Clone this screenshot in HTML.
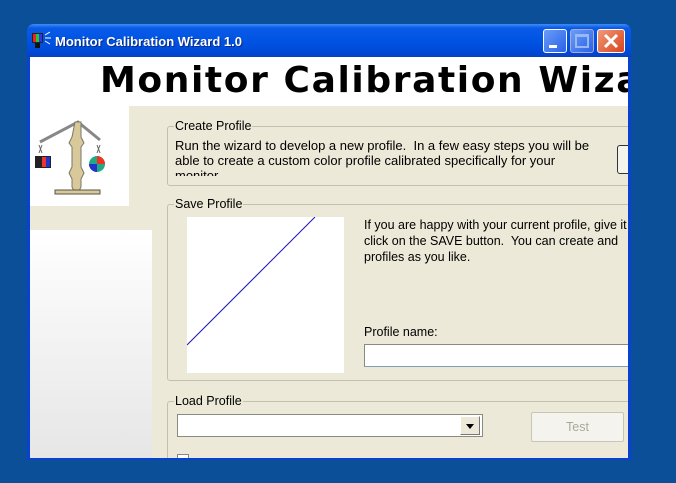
<!DOCTYPE html>
<html><head><style>
*{margin:0;padding:0;box-sizing:border-box}
body{width:676px;height:483px;background:#0a4f98;position:relative;overflow:hidden;font-family:"Liberation Sans",sans-serif;font-size:12px;color:#000}
.a{position:absolute}
.win{left:27px;top:24px;width:604px;height:436px;background:#0842d0;border-radius:7px 7px 0 0}
.tb{left:27px;top:24px;width:604px;height:33px;border-radius:7px 7px 0 0;background:linear-gradient(#3d8df7 0%,#0a5ae8 12%,#0054e3 50%,#0048d8 85%,#0a3fc0 100%)}
.client{left:30px;top:57px;width:598px;height:401px;background:#ece9d8;overflow:hidden}
.gb{position:absolute;border:1px solid #c4c0b0;border-radius:3px}
.gl{position:absolute;top:-8px;left:6px;background:#ece9d8;padding:0 1px;font-size:12.5px}
.btn{position:absolute;border-radius:3px;border:1px solid #fff}
</style></head><body>
<div class="a win"></div>
<div class="a tb"></div>
<svg class="a" style="left:31px;top:31px" width="22" height="20">
<rect x="1" y="2" width="11" height="10" fill="#222"/><rect x="2" y="3" width="3" height="8" fill="#e22"/><rect x="5" y="3" width="3" height="8" fill="#2c2"/><rect x="8" y="3" width="3" height="8" fill="#33e"/><rect x="4" y="12" width="5" height="5" fill="#111"/>
<path d="M14 4l5-3M14 7h6M14 10l5 3" stroke="#fff" stroke-width="1"/></svg>
<div class="a" style="left:55px;top:34px;color:#fff;font-weight:bold;font-size:13px;text-shadow:1px 1px #0a2a80">Monitor Calibration Wizard 1.0</div>
<div class="btn a" style="left:543px;top:29px;width:24px;height:24px;background:linear-gradient(135deg,#6a9cf8,#2a62e8)"><div class="a" style="left:5px;top:15px;width:8px;height:3px;background:#fff"></div></div>
<div class="btn a" style="left:570px;top:29px;width:24px;height:24px;background:linear-gradient(135deg,#6a9cf8,#2a62e8);border-color:#aac"><div class="a" style="left:4px;top:4px;width:14px;height:14px;border:2px solid #9ab8f0;border-top-width:3px"></div></div>
<div class="btn a" style="left:597px;top:29px;width:28px;height:24px;background:linear-gradient(135deg,#f09a78,#d8441c)"><svg class="a" style="left:5px;top:3px" width="16" height="16"><path d="M2 2L14 14M14 2L2 14" stroke="#fff" stroke-width="3"/></svg></div>
<div class="a client">
 <div class="a" style="left:0;top:0;width:598px;height:49px;background:#fff"></div>
 <div class="a" style="left:70px;top:3px;font-size:36px;font-weight:bold;white-space:nowrap;font-family:'DejaVu Sans','Liberation Sans',sans-serif;letter-spacing:1.6px">Monitor Calibration Wizard</div>
 <div class="a" style="left:0;top:49px;width:99px;height:100px;background:#fff"></div>
 <svg class="a" style="left:0;top:60px" width="99" height="85">
  <path d="M10 25L48 5L70 23" stroke="#888" stroke-width="3" fill="none"/>
  <path d="M45 5h6v15l3 6-3 4v20l3 6-3 6v8l-3 6h-3l-3-6v-8l-3-6 3-6V30l-3-4 3-6z" fill="#d8c89a" stroke="#776" stroke-width="1"/>
  <rect x="25" y="73" width="45" height="4" fill="#d8c89a" stroke="#554"/>
  <path d="M9 28l3 8M12 28l-3 8" stroke="#666"/><path d="M67 28l3 8M70 28l-3 8" stroke="#666"/>
  <rect x="5" y="39" width="16" height="12" fill="#222"/><rect x="12" y="40" width="4" height="10" fill="#e33"/><rect x="16" y="40" width="4" height="10" fill="#23c"/>
  <circle cx="67" cy="47" r="8" fill="#2a8"/><path d="M67 39a8 8 0 0 1 8 8h-8z" fill="#e32"/><path d="M59 47a8 8 0 0 0 8 8v-8z" fill="#23c"/>
 </svg>
 <div class="a" style="left:0;top:173px;width:122px;height:228px;background:linear-gradient(#fff,#e6e6e6)"></div>
 <div class="gb" style="left:137px;top:69px;width:470px;height:60px"><div class="gl">Create Profile</div></div>
 <div class="a" style="left:145px;top:81px;width:424px;height:38px;overflow:hidden;line-height:15px;font-size:13px">Run the wizard to develop a new profile.&nbsp; In a few easy steps you will be able to create a custom color profile calibrated specifically for your monitor.</div>
 <div class="a" style="left:587px;top:88px;width:20px;height:29px;border:1px solid #333;border-radius:3px;background:#f4f3ee"></div>
 <div class="gb" style="left:137px;top:147px;width:470px;height:177px"><div class="gl">Save Profile</div></div>
 <div class="a" style="left:157px;top:160px;width:157px;height:156px;background:#fff"></div>
 <svg class="a" style="left:157px;top:160px" width="157" height="156"><line x1="0" y1="128" x2="128" y2="0" stroke="#1a14b8" stroke-width="1"/></svg>
 <div class="a" style="left:334px;top:160px;width:300px;line-height:16px;white-space:nowrap;font-size:12.5px">If you are happy with your current profile, give it a<br>click on the SAVE button.&nbsp; You can create and<br>profiles as you like.</div>
 <div class="a" style="left:334px;top:268px;font-size:12.5px">Profile name:</div>
 <div class="a" style="left:334px;top:287px;width:270px;height:23px;background:#fff;border:1px solid #7f9db9;border-top-color:#8a8a80;border-left-color:#8a8a80"></div>
 <div class="gb" style="left:137px;top:344px;width:470px;height:70px"><div class="gl">Load Profile</div></div>
 <div class="a" style="left:147px;top:357px;width:306px;height:23px;background:#fff;border:1px solid #8a8a80"></div>
 <div class="a" style="left:430px;top:359px;width:20px;height:19px;background:#ece9d8;border:1px solid #fff;border-right-color:#777;border-bottom-color:#777"><div class="a" style="left:5px;top:7px;width:0;height:0;border-left:4px solid transparent;border-right:4px solid transparent;border-top:5px solid #000"></div></div>
 <div class="a" style="left:501px;top:355px;width:93px;height:30px;border:1px solid #c8c5b4;border-radius:2px;background:#f4f3ee;color:#aca899;text-align:center;line-height:28px;font-size:12.5px">Test</div>
 <div class="a" style="left:147px;top:397px;width:12px;height:12px;border:1px solid #888;background:#fff"></div>
</div>
</body></html>
